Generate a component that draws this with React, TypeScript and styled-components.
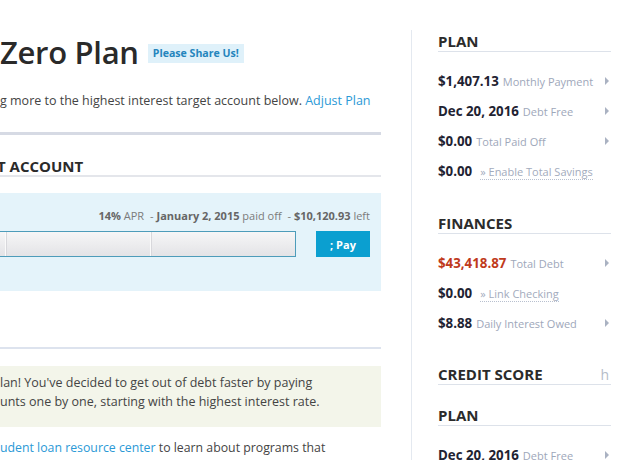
import React from "react";
import styled, { createGlobalStyle } from "styled-components";

const Global = createGlobalStyle`
  html, body { margin: 0; padding: 0; background: #fff; }
  body { font-family: "Open Sans", "Noto Sans", sans-serif; color: #333; overflow: hidden; }
  * { box-sizing: border-box; }
`;

const Page = styled.div`
  display: flex;
  width: 617px;
  height: 460px;
  overflow: hidden;
`;

const Main = styled.main`
  flex: none;
  width: 381px;
  padding-top: 30px;
  overflow: hidden;
`;

const TitleRow = styled.div`
  display: flex;
  align-items: center;
  gap: 9px;
  height: 44px;
`;

const Title = styled.h1`
  margin: 0;
  font-size: 31px;
  font-weight: 600;
  letter-spacing: -0.3px;
  color: #2a2a2a;
  line-height: 44px;
`;

const Badge = styled.span`
  display: inline-block;
  margin-top: 3px;
  padding: 0 5px;
  height: 19px;
  line-height: 19px;
  background: #dff1fa;
  color: #2585bd;
  font-size: 10.6px;
  font-weight: 700;
`;

const Intro = styled.p`
  margin: 18px 0 0;
  font-size: 12.5px;
  line-height: 18px;
  color: #444;
  white-space: nowrap;
`;

const Link = styled.a`
  color: #2b99d6;
  text-decoration: none;
`;

const Rule = styled.hr<{ $thick?: boolean; $mt: number }>`
  margin: ${(p) => p.$mt}px 0 0;
  border: 0;
  height: ${(p) => (p.$thick ? 3 : 2)}px;
  background: ${(p) => (p.$thick ? "#d6dae4" : "#dde3ee")};
`;

const SectionHeading = styled.h2`
  margin: 23px 0 0 -3px;
  font-size: 15px;
  font-weight: 700;
  line-height: 16px;
  color: #2a2a2a;
  padding-bottom: 1px;
  border-bottom: 2px solid #e4e6eb;
`;

const AccountCard = styled.section`
  margin-top: 16px;
  height: 98px;
  background: #e4f3fa;
  padding: 15px 11px 0 0;
`;

const Meta = styled.div`
  text-align: right;
  font-size: 11px;
  line-height: 16px;
  color: #7b7b7b;
  white-space: nowrap;
  b { color: #666; font-weight: 700; }
  span { margin: 0 3px; }
`;

const BarRow = styled.div`
  display: flex;
  align-items: center;
  justify-content: space-between;
  margin-top: 7px;
`;

const Bar = styled.div`
  display: flex;
  width: 296px;
  height: 26px;
  border: 1px solid #4d9cba;
  border-left: 0;
  background: linear-gradient(#f6f6f7, #e3e3e6);
`;

const Segment = styled.div<{ $w: number }>`
  flex: none;
  width: ${(p) => p.$w}px;
  border-right: 1px solid #fafafa;
  box-shadow: 1px 0 0 #d8d8dc;
`;

const PayButton = styled.button`
  width: 54px;
  height: 26px;
  border: 0;
  background: #0b9fd0;
  color: #fff;
  font-family: inherit;
  font-size: 11px;
  font-weight: 700;
  padding: 0;
`;

const Notice = styled.div`
  margin-top: 17px;
  height: 61px;
  background: #f3f5ea;
  padding: 7px 0 0;
  font-size: 12.5px;
  line-height: 19px;
  color: #444;
  white-space: nowrap;
`;

const Para = styled.p`
  margin: 12px 0 0;
  font-size: 12.3px;
  line-height: 18px;
  color: #444;
  white-space: nowrap;
`;

const Sidebar = styled.aside`
  flex: none;
  margin-left: 30px;
  margin-top: 30px;
  width: 206px;
  border-left: 1px solid #e4e9f0;
  padding: 3px 6px 0 26px;
`;

const SideHeading = styled.h3<{ $mt: number }>`
  margin: ${(p) => p.$mt}px 0 0;
  display: flex;
  justify-content: space-between;
  font-size: 15px;
  font-weight: 700;
  line-height: 17px;
  color: #2b2b2b;
  padding-bottom: 1px;
  border-bottom: 1px solid #dde2ea;
`;

const HeadingIcon = styled.span`
  font-weight: 400;
  color: #b5bcc8;
  font-size: 14px;
  padding-right: 2px;
`;

const List = styled.ul`
  list-style: none;
  margin: 14px 0 0;
  padding: 0;
`;

const Row = styled.li`
  display: flex;
  align-items: baseline;
  height: 30px;
  line-height: 30px;
  white-space: nowrap;
`;

const Value = styled.strong<{ $red?: boolean }>`
  font-size: 13.3px;
  font-weight: 700;
  color: ${(p) => (p.$red ? "#bf3a1c" : "#1f2332")};
`;

const Label = styled.span`
  margin-left: 4px;
  font-size: 11px;
  color: #9ea7ba;
  flex: 1;
`;

const ActionLink = styled.span`
  margin-left: 8px;
  font-size: 11px;
  color: #a3abbd;
  line-height: 14px;
  border-bottom: 1px dotted #b8c0cf;
`;

const Arrow = styled.span`
  align-self: center;
  width: 0;
  height: 0;
  border-left: 4px solid #aab2c2;
  border-top: 4px solid transparent;
  border-bottom: 4px solid transparent;
  margin-right: 2px;
`;

type Item = { value: string; label: string; action?: boolean; red?: boolean };

const SideList = ({ items }: { items: Item[] }) => (
  <List>
    {items.map((it) => (
      <Row key={it.label}>
        <Value $red={it.red}>{it.value}</Value>
        {it.action ? (
          <ActionLink>» {it.label}</ActionLink>
        ) : (
          <>
            <Label>{it.label}</Label>
            <Arrow />
          </>
        )}
      </Row>
    ))}
  </List>
);

export default function App() {
  return (
    <>
      <Global />
      <Page>
        <Main>
          <TitleRow>
            <Title>Zero Plan</Title>
            <Badge>Please Share Us!</Badge>
          </TitleRow>
          <Intro>
            g more to the highest interest target account below.{" "}
            <Link href="#">Adjust Plan</Link>
          </Intro>
          <Rule $thick $mt={22} />
          <SectionHeading>T ACCOUNT</SectionHeading>
          <AccountCard>
            <Meta>
              <b>14%</b> APR <span>-</span>
              <b>January 2, 2015</b> paid off <span>-</span>
              <b>$10,120.93</b> left
            </Meta>
            <BarRow>
              <Bar>
                <Segment $w={6} />
                <Segment $w={145} />
              </Bar>
              <PayButton>; Pay</PayButton>
            </BarRow>
          </AccountCard>
          <Rule $mt={56} />
          <Notice>
            lan! You've decided to get out of debt faster by paying
            <br />
            unts one by one, starting with the highest interest rate.
          </Notice>
          <Para>
            <Link href="#">udent loan resource center</Link> to learn about
            programs that
          </Para>
        </Main>
        <Sidebar>
          <SideHeading $mt={0}>PLAN</SideHeading>
          <SideList
            items={[
              { value: "$1,407.13", label: "Monthly Payment" },
              { value: "Dec 20, 2016", label: "Debt Free" },
              { value: "$0.00", label: "Total Paid Off" },
              { value: "$0.00", label: "Enable Total Savings", action: true },
            ]}
          />
          <SideHeading $mt={29}>FINANCES</SideHeading>
          <SideList
            items={[
              { value: "$43,418.87", label: "Total Debt", red: true },
              { value: "$0.00", label: "Link Checking", action: true },
              { value: "$8.88", label: "Daily Interest Owed" },
            ]}
          />
          <SideHeading $mt={28}>
            CREDIT SCORE<HeadingIcon>h</HeadingIcon>
          </SideHeading>
          <SideHeading $mt={22}>PLAN</SideHeading>
          <SideList items={[{ value: "Dec 20, 2016", label: "Debt Free" }]} />
        </Sidebar>
      </Page>
    </>
  );
}
